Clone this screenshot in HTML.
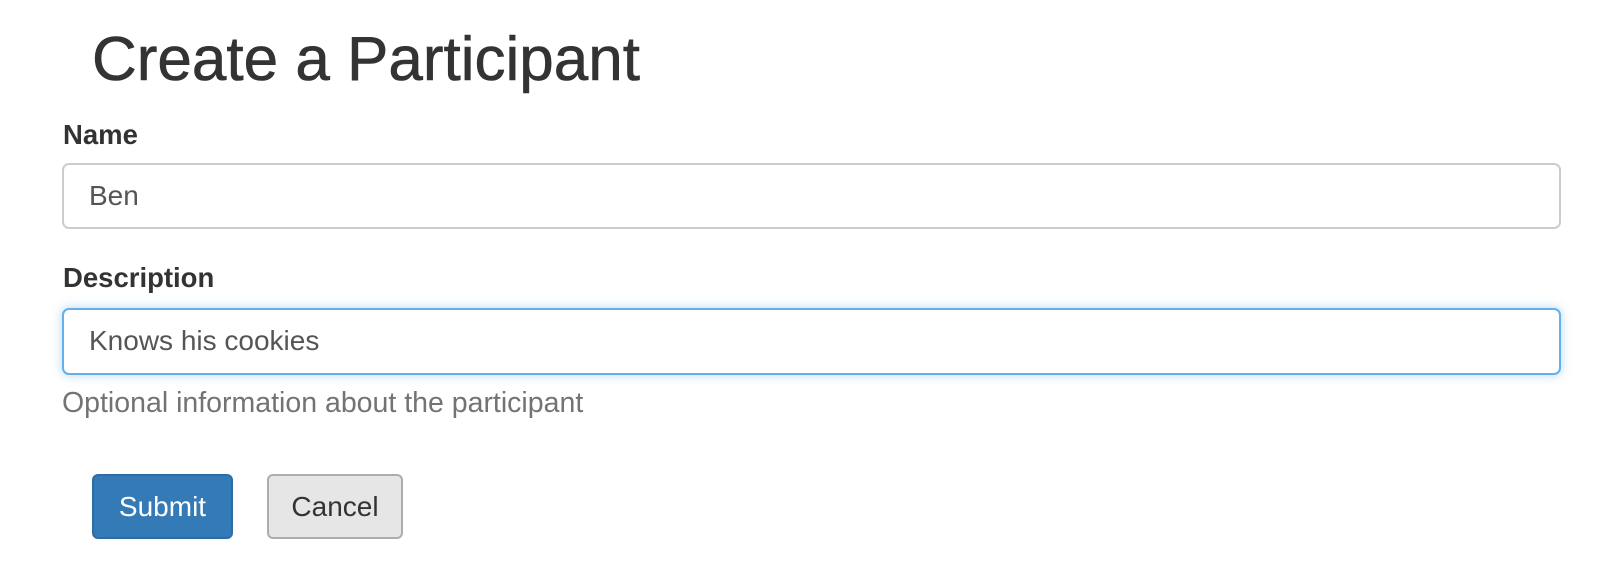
<!DOCTYPE html>
<html><head><meta charset="utf-8"><style>
body{margin:0;width:1622px;height:584px;background:#fff;font-family:"Liberation Sans",Helvetica,Arial,sans-serif;color:#333;position:relative;overflow:hidden}
.a{position:absolute;white-space:nowrap}
h1{position:absolute;margin:0;left:92px;top:22px;font-size:62px;font-weight:normal;line-height:76px;color:#333;-webkit-text-stroke:0.6px #333}
.lbl{font-weight:bold;font-size:27.5px;line-height:32px}
.inp{position:absolute;left:62px;width:1499px;box-sizing:border-box;border:2px solid #ccc;border-radius:7px;background:#fff;font-size:28px;color:#555;padding-left:25px;line-height:62px}
.focus{border-color:#66afe9;box-shadow:0 0 10px rgba(102,175,233,.5)}
.btn{position:absolute;top:474px;height:65px;box-sizing:border-box;border-radius:6px;font-size:28px;line-height:61px;text-align:center}
</style></head><body>
<h1>Create a Participant</h1>
<div class="a lbl" style="left:63px;top:119px">Name</div>
<div class="inp" style="top:163px;height:66px">Ben</div>
<div class="a lbl" style="left:63px;top:262px">Description</div>
<div class="inp focus" style="top:308px;height:67px">Knows his cookies</div>
<div class="a" style="left:62px;top:387px;font-size:28.5px;line-height:32px;color:#737373">Optional information about the participant</div>
<div class="btn" style="left:92px;width:141px;background:#337ab7;border:2px solid #2e6da4;color:#fff">Submit</div>
<div class="btn" style="left:267px;width:136px;background:#e6e6e6;border:2px solid #adadad;color:#333">Cancel</div>
</body></html>
